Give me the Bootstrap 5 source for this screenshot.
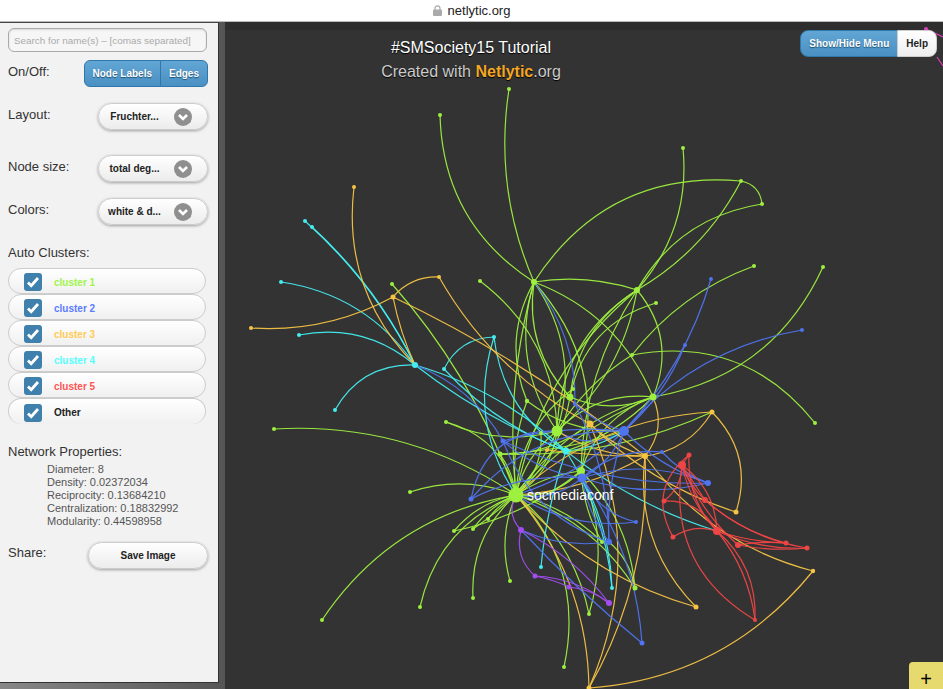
<!DOCTYPE html>
<html lang="en"><head><meta charset="utf-8"><title>netlytic.org</title>
<link href="https://cdn.jsdelivr.net/npm/bootstrap@5.3.0/dist/css/bootstrap.min.css" rel="stylesheet">
<style>
html,body{height:100%;overflow:hidden}
body{font-family:"Liberation Sans",Arial,sans-serif;color:#333;background:#fff;display:flex;flex-direction:column;height:689px}
.urlbar{height:22px;flex:none;font-size:13px;color:#222;border-bottom:1px solid #bbb}
.urlbar svg{margin-right:6px}
.workspace{flex:1;min-height:0;background:#333}
.sidewrap{width:225px;flex:none;padding:0 6px 6px 0;background:linear-gradient(90deg,#888,#555);height:100%}
.sidepanel{height:100%;background:#f2f2f2;border-right:1px solid #333;border-bottom:1px solid #333;border-top:1px solid #444;padding:5px 10px 0 8px;font-size:13px}
.searchbox.form-control{height:24px;width:199px;font-size:9.9px;padding:2px 5px;border:1px solid #aaa;border-radius:6px;background:#f6f6f6;box-shadow:inset 0 1px 2px rgba(0,0,0,.12);color:#888}
.searchbox::placeholder{color:#aaa}
.optrow{display:flex;justify-content:space-between;align-items:flex-start}
.optrow>span{padding-top:1.5px}
.row-onoff{margin-top:8px;height:43px}
.row-layout{height:52px}
.row-size{height:43px}
.row-colors{height:45px}
.bluegroup .btn{font-size:10px;font-weight:700;color:#fff;height:27px;padding:0 8px;background:linear-gradient(#62a6d5,#4a90c2);border:1px solid #2f78aa;text-shadow:0 1px 1px #1f5070;--bs-btn-border-radius:6px;line-height:25px}
.pickbtn{width:110px;height:27px;border-radius:14px;background:linear-gradient(#fff,#ececec);border:1px solid #ccc;box-shadow:0 1px 3px rgba(0,0,0,.35);display:flex;align-items:center;padding:0 15px 0 2px;font-size:10px;font-weight:700;color:#222}
.pickbtn>span{flex:1;text-align:center;padding-right:6px}
.chev{width:18px;height:18px;border-radius:50%;background:#8f8f8f;display:flex;align-items:center;justify-content:center;flex:none}
.clusterlist{margin-top:5.5px}
.clusterpill{height:26px;width:198px;border:1px solid #ccc;border-radius:13px;background:linear-gradient(#fff,#f0f0f0);display:flex;align-items:center;padding:2px 0 0 15px;font-size:10px;font-weight:700;gap:12px;margin-bottom:0}
.clusterpill:last-child{border-bottom:0}
.tick{width:18px;height:18px;border-radius:3px;background:#3f80ad;display:flex;align-items:center;justify-content:center;flex:none}
.c1{color:#a0f44a}.c2{color:#5c7cff}.c3{color:#ffcc55}.c4{color:#55ffff}.c5{color:#ff5555}.c6{color:#222}
.nethead{margin-top:17.5px}
.netprops{padding-left:39px;font-size:11px;line-height:13px;color:#555;margin-top:2px}
.sharerow{margin-top:13.5px;height:27px}
.savebtn{width:120px;justify-content:center;padding:0}
.stage{flex:1;min-width:0;background:linear-gradient(#2e2e2e 8px,#333 8px)}
.stage svg{display:block;width:100%;height:100%}
.graphtitle{position:absolute;left:0;width:492px;top:14px;text-align:center;font-size:16px;line-height:24px;color:#fff;text-shadow:0 1px 1px #000}
.graphtitle div+div{color:#ccc}
.graphtitle b{color:#f5a623}
.topbtns{position:absolute;top:8px;right:6px;height:27px}
.topbtns .btn{height:27px;font-size:10px;font-weight:700;padding:0 8px;line-height:25px;--bs-btn-border-radius:8px}
.topbtns .helpbtn{background:linear-gradient(#fff,#eee);border:1px solid #ccc;color:#222;text-shadow:none}
.plusbtn{position:absolute;right:0;bottom:0;width:34px;height:27px;background:#e6d96e;border-radius:4px 0 0 0;border:0;padding:0;display:flex;justify-content:center;align-items:flex-start}
.plusbtn span{display:block;color:#000;font-size:20px;line-height:20px;margin-top:7px}
</style></head>
<body>
<div class="urlbar d-flex align-items-center justify-content-center">
<svg width="9" height="11" viewBox="0 0 9 11"><path d="M2 5V3.3a2.5 2.5 0 0 1 5 0V5" fill="none" stroke="#aaa" stroke-width="1.2"/><rect y="4.6" width="9" height="6.4" rx="1" fill="#aaa"/></svg><span>netlytic.org</span></div>
<div class="workspace d-flex">
<div class="sidewrap"><aside class="sidepanel">
<input class="form-control searchbox" placeholder="Search for name(s) – [comas separated]">
<div class="optrow row-onoff"><span>On/Off:</span><div class="btn-group bluegroup"><button class="btn">Node Labels</button><button class="btn">Edges</button></div></div>
<div class="optrow row-layout"><span>Layout:</span><div class="pickbtn"><span>Fruchter...</span><i class="chev"><svg width="12" height="10" viewBox="0 0 12 10"><path d="M2 3l4 4 4-4" fill="none" stroke="#fff" stroke-width="2.6"/></svg></i></div></div>
<div class="optrow row-size"><span>Node size:</span><div class="pickbtn"><span>total deg...</span><i class="chev"><svg width="12" height="10" viewBox="0 0 12 10"><path d="M2 3l4 4 4-4" fill="none" stroke="#fff" stroke-width="2.6"/></svg></i></div></div>
<div class="optrow row-colors"><span>Colors:</span><div class="pickbtn"><span>white &amp; d...</span><i class="chev"><svg width="12" height="10" viewBox="0 0 12 10"><path d="M2 3l4 4 4-4" fill="none" stroke="#fff" stroke-width="2.6"/></svg></i></div></div>
<div>Auto Clusters:</div>
<div class="clusterlist" id="clusters"></div>
<div class="nethead">Network Properties:</div>
<div class="netprops"><div>Diameter: 8</div><div>Density: 0.02372034</div><div>Reciprocity: 0.13684210</div><div>Centralization: 0.18832992</div><div>Modularity: 0.44598958</div></div>
<div class="optrow sharerow"><span>Share:</span><div class="pickbtn savebtn">Save Image</div></div>
</aside></div>
<main class="stage position-relative">
<svg id="graph" viewBox="225 22 718 667" preserveAspectRatio="none"></svg>
<div class="graphtitle"><div>#SMSociety15 Tutorial</div><div>Created with <b>Netlytic</b>.org</div></div>
<div class="btn-group topbtns bluegroup"><button class="btn">Show/Hide Menu</button><button class="btn helpbtn">Help</button></div>
<button class="plusbtn"><span>+</span></button>
</main>
</div>
<script src="https://cdn.jsdelivr.net/npm/bootstrap@5.3.0/dist/js/bootstrap.bundle.min.js"></script>
<script>
var cl=[["cluster 1","c1"],["cluster 2","c2"],["cluster 3","c3"],["cluster 4","c4"],["cluster 5","c5"],["Other","c6"]];
document.getElementById("clusters").innerHTML=cl.map(function(c){return '<div class="clusterpill"><i class="tick"><svg width="14" height="12" viewBox="0 0 14 12"><path d="M2 6.5l3.2 3.2L12 2" fill="none" stroke="#fff" stroke-width="2.8"/></svg></i><span class="'+c[1]+'">'+c[0]+'</span></div>'}).join("");
var g="#9ef03f",b="#4f74f0",o="#f6c445",c="#44eef0",r="#f04545",p="#a24df0",m="#e040c0";
var P={H:[516,495,7.5,g],G1:[557,431,5.5,g],G2:[581,471,4,g],B1:[582,478,4.5,b],B2:[624,431,5,b],G3:[653,397,3.5,g],O1:[590,424,3.5,o],C1:[566,451,3.5,c],O2:[645,456,3,o],o3:[547,450,2,o],b3:[503,441,2.5,b],g4:[500,454,2.5,g],g5:[527,401,2.2,g],g6:[570,397,3.5,g],g7:[573,389,2,g],b4:[575,404,2,b],g8:[541,433,2,g],b5:[662,452,2,b],
A:[534,282,3,g],B:[637,290,3,g],C:[415,365,3,c],
t1:[509,89,2,g],t2:[440,115,2,g],t3:[683,148,2,g],t4:[741,181,2,g],t5:[762,204,2,g],t6:[823,267,2,g],t7:[754,266,2,g],t8:[480,281,2,g],t9:[392,284,2,g],t10:[656,303,2,g],t11:[632,355,2,g],t12:[815,423,2,g],
l1:[274,429,2,g],l2:[410,492,2,g],l3:[322,620,2,g],l4:[420,607,2,g],l5:[473,598,2,g],l6:[564,667,2,g],l7:[446,422,2,g],l8:[454,531,2,g],l9:[473,529,2,g],l10:[488,519,2,g],l11:[510,581,2,g],l12:[602,542,2,g],l13:[635,588,2.5,g],l14:[589,614,2,g],
c1:[305,221,2,c],c2:[312,227,2,c],c3:[281,282,2,c],c4:[299,335,2,c],c5:[335,410,2,c],c6:[494,337,2,c],c7:[444,369,2,c],c8:[541,567,2,c],c9:[612,588,2,c],
o1:[354,187,2,o],o2:[251,328,2,o],o4:[393,297,2.5,o],o5:[439,277,2,o],o6:[712,412,2.5,o],o7:[736,512,2.5,o],o8:[813,571,2.2,o],o9:[696,607,2.5,o],o10:[589,688,2.5,o],
b6:[711,279,2,b],b7:[802,330,2,b],b8:[685,345,2,b],b9:[471,499,2.5,b],b10:[636,522,2,b],b11:[609,542,3,b],b12:[642,643,2.5,b],b13:[708,483,3,b],
r1:[689,455,2.5,r],r2:[682,465,4,r],r3:[664,501,2.5,r],r4:[705,500,3,r],r5:[673,537,2.5,r],r6:[717,531,4,r],r7:[738,545,3,r],r8:[786,543,2.5,r],r9:[807,548,2.5,r],r10:[755,620,2,r],
p1:[521,530,3,p],p2:[535,576,2.5,p],p3:[569,587,2.5,p],p4:[609,603,3,p],
m1:[926,29,2,m]};
var E=[
"t1 A .12","t2 A .22","t3 B -.18","t4 A .25","t4 B -.12","t5 B .2","t4 t5 -.3","t6 G3 -.22","t7 t11 .12","t12 t11 .25","B A .1","A H .08","B H .15","G3 H .1","A G1 -.2","A G1 .2","B G1 .22","B G1 -.15","A G2 -.22","B G2 .12","A G3 -.18","B G3 -.25","A g6 .2","B g6 .2","A g5 .2","A b4 -.15","t10 g6 .25","t8 G1 -.2","t9 H -.08","t11 G1 .1",
"H G1 -.15","H G1 .2","H G2 .2","H G2 -.1","H g5 -.1","H g6 .15","H g7 -.2","H g8 .2","H g4 .1","H B2 .1","H G3 -.15","H O2 .1",
"H l1 .14","H l2 .15","H l3 .18","H l4 .22","H l5 .2","H l6 -.22","H l7 .25","H l8 .15","H l9 .12","H l10 .1","H l11 .15","H l12 -.12","H l13 -.15","H l14 -.15","H o10 -.15","l8 G2 .1","l9 G1 .12","g4 B2 .06","g4 O1 .15","l7 G1 .15",
"G2 l13 -.15","G2 l12 .1","G1 G3 -.2","G1 B2 .25","G1 O2 .12","g6 G3 .18","G3 G2 .2","G3 O2 -.25","g5 B2 .15","l13 b11 .15","l14 G2 .15",
"C c1 .08","C c2 .08","C c3 .18","C c4 .2","C c5 .25","C C1 -.1","C C1 .06","C b3 -.15","c6 c7 .25","c6 C1 .2","c6 H .2","C1 r6 .08","C1 c9 -.1","C1 c8 .05","C1 G3 .1","C1 B2 .1","C1 c7 -.1","B1 c9 -.1",
"o1 C .2","o2 o4 .12","o4 o5 -.2","o4 O2 -.05","o4 C .05","o5 O1 .12","O1 o7 .1","O1 O2 .1","O2 o6 .2","O2 o9 .2","O2 o10 -.12","o6 o7 -.25","o6 H .15","o6 g4 -.1","H o9 .12","o8 o10 -.18","o8 O2 -.15","o3 O2 .03","O1 o10 -.18",
"B2 b6 .1","B2 b7 -.15","B2 b8 .1","B2 b9 .2","B1 b9 .12","B1 B2 .15","B1 b13 .12","B1 b13 -.15","B2 b13 .1","b3 b13 .1","b3 B1 .12","b3 B2 -.08","B1 b10 .2","H b10 .15","B1 b11 .1","p1 b11 .12","b9 G1 -.35","B1 b12 -.12","p1 b12 .03","b4 B2 .1","b4 b11 -.1","b5 B1 .18","b11 B2 -.08","b5 b13 .1","b3 b11 .2","H B1 .2",
"r2 r3 -.2","r2 r4 0","r2 r4 .1","r2 r6 .12","r2 r6 -.2","r1 r6 .18","r1 r5 .35","r3 r6 -.25","r5 r6 -.2","r2 r7 .1","r4 r8 .1","r4 r9 .12","r6 r8 .06","r6 r9 .1","r2 r10 .28","r6 r10 -.2","r6 r10 -.12","r7 r8 -.05","r7 r9 .06","r1 r2 0",
"p1 p2 .25","p1 p4 -.1","p2 p4 -.13","p3 p4 -.12","p2 p3 -.05","H p1 .3"];
var h="";
E.forEach(function(e){var t=e.split(" "),A=P[t[0]],B=P[t[1]],k=+t[2];if(!A||!B)return;
var dx=B[0]-A[0],dy=B[1]-A[1],mx=(A[0]+B[0])/2-dy*k*1.2,my=(A[1]+B[1])/2+dx*k*1.2;
h+='<path d="M'+A[0]+' '+A[1]+'Q'+mx.toFixed(1)+' '+my.toFixed(1)+' '+B[0]+' '+B[1]+'" stroke="'+(B[2]<=A[2]?B[3]:A[3])+'"/>'});
var gr='<g fill="none" stroke-width="1.2" stroke-opacity=".95">'+h+'<path d="M926 29L943 37M937 57L943 66" stroke="'+m+'"/></g>';
for(var n in P){var q=P[n];gr+='<circle cx="'+q[0]+'" cy="'+q[1]+'" r="'+q[2]+'" fill="'+q[3]+'"/>'}
gr+='<text x="527" y="500" font-size="14" fill="#fff" font-family="Liberation Sans">socmediaconf</text>';
document.getElementById("graph").innerHTML=gr;
</script>
</body></html>
